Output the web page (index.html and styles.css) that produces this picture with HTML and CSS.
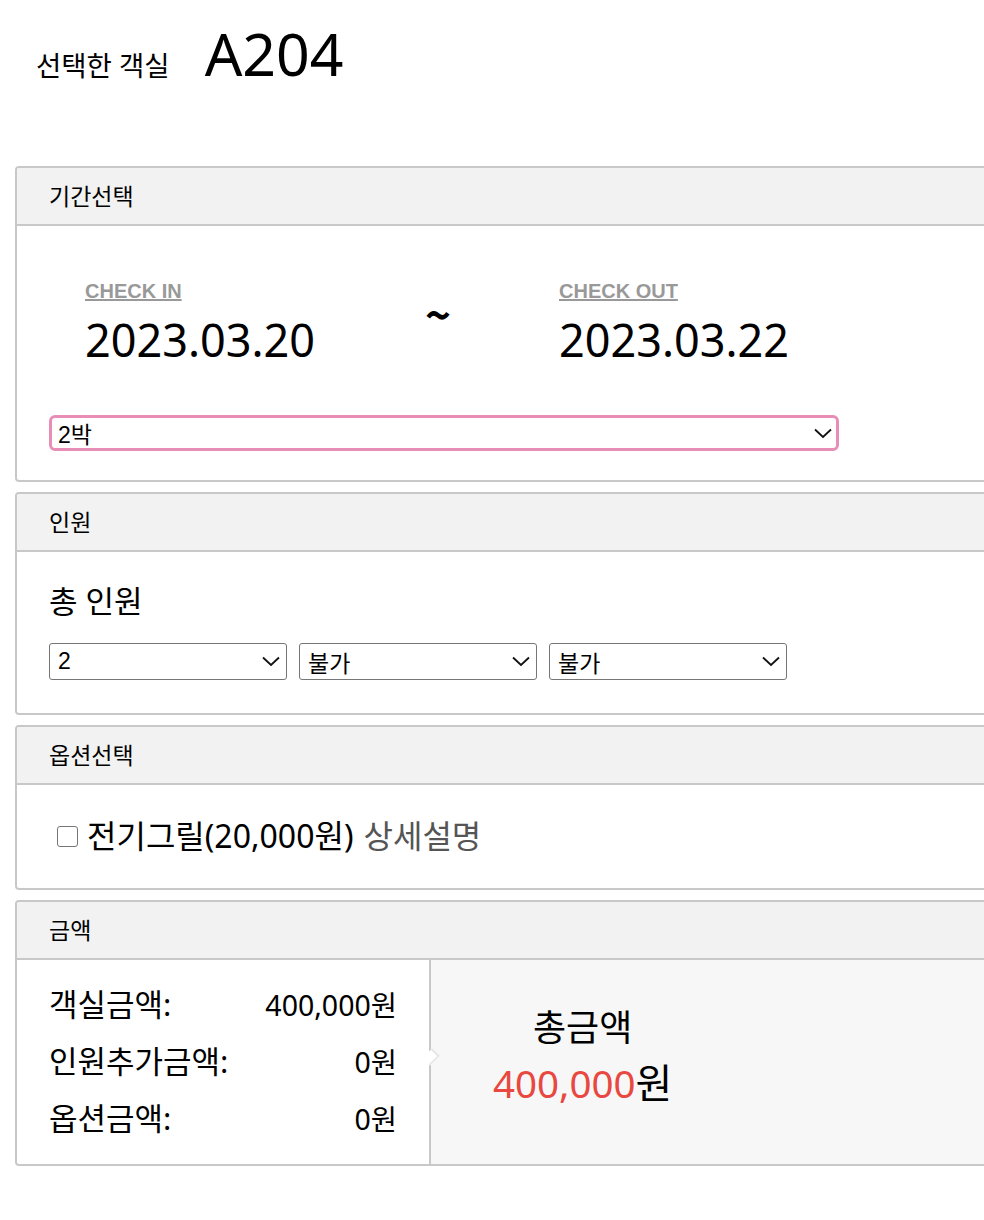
FILE: index.html
```html
<!DOCTYPE html>
<html lang="ko">
<head>
<meta charset="utf-8">
<title>객실 예약</title>
<link rel="stylesheet" href="styles.css">
</head>
<body>
<div class="page">
  <div class="room-title">
    <span class="room-label">선택한 객실</span>
    <span class="room-no">A204</span>
  </div>

  <section class="panel panel-period">
    <h2 class="panel-head">기간선택</h2>
    <div class="panel-body period-body">
      <div class="dates">
        <div class="date-col">
          <a class="date-label" href="#">CHECK IN</a>
          <div class="date-value">2023.03.20</div>
        </div>
        <div class="tilde">~</div>
        <div class="date-col">
          <a class="date-label" href="#">CHECK OUT</a>
          <div class="date-value">2023.03.22</div>
        </div>
      </div>
      <div class="sel sel-nights">
        <span class="sel-text">2박</span>
        <svg class="chev" width="18" height="11" viewBox="0 0 18 11"><path d="M1 1.5 L9 9 L17 1.5" fill="none" stroke="#111" stroke-width="1.8"/></svg>
      </div>
    </div>
  </section>

  <section class="panel panel-people">
    <h2 class="panel-head">인원</h2>
    <div class="panel-body people-body">
      <div class="people-title">총 인원</div>
      <div class="sel-row">
        <div class="sel sel-small">
          <span class="sel-text">2</span>
          <svg class="chev" width="18" height="11" viewBox="0 0 18 11"><path d="M1 1.5 L9 9 L17 1.5" fill="none" stroke="#111" stroke-width="1.8"/></svg>
        </div>
        <div class="sel sel-small">
          <span class="sel-text">불가</span>
          <svg class="chev" width="18" height="11" viewBox="0 0 18 11"><path d="M1 1.5 L9 9 L17 1.5" fill="none" stroke="#111" stroke-width="1.8"/></svg>
        </div>
        <div class="sel sel-small">
          <span class="sel-text">불가</span>
          <svg class="chev" width="18" height="11" viewBox="0 0 18 11"><path d="M1 1.5 L9 9 L17 1.5" fill="none" stroke="#111" stroke-width="1.8"/></svg>
        </div>
      </div>
    </div>
  </section>

  <section class="panel panel-option">
    <h2 class="panel-head">옵션선택</h2>
    <div class="panel-body option-body">
      <label class="option">
        <span class="checkbox"></span>
        <span class="option-name">전기그릴(20,000원)</span>
        <span class="option-more">상세설명</span>
      </label>
    </div>
  </section>

  <section class="panel panel-price">
    <h2 class="panel-head">금액</h2>
    <div class="price-body">
      <div class="price-list">
        <div class="price-row"><span class="price-label">객실금액:</span><span class="price-value">400,000원</span></div>
        <div class="price-row"><span class="price-label">인원추가금액:</span><span class="price-value">0원</span></div>
        <div class="price-row"><span class="price-label">옵션금액:</span><span class="price-value">0원</span></div>
      </div>
      <div class="price-total">
        <div class="total-box">
          <div class="total-label">총금액</div>
          <div class="total-value"><span class="total-num">400,000</span>원</div>
        </div>
      </div>
    </div>
  </section>
</div>
</body>
</html>
```

FILE: styles.css
```css
html, body {
  margin: 0;
  padding: 0;
  overflow: hidden;
  background: #fff;
}
body {
  font-family: "Noto Sans", "Noto Sans CJK KR", sans-serif;
  color: #000;
}
.page {
  width: 1040px;
  padding: 0 0 40px 15px;
}
.room-title {
  display: flex;
  align-items: baseline;
  padding: 24px 0 0 21px;
  height: 166px;
  box-sizing: border-box;
}
.room-label {
  font-size: 27.5px;
  margin-right: 35px;
}
.room-no {
  font-size: 59px;
  line-height: 1;
}
.panel {
  border: 2px solid #c8c8c8;
  border-radius: 4px;
  margin-bottom: 10px;
  overflow: hidden;
}
.panel-head {
  margin: 0;
  height: 56px;
  line-height: 56px;
  padding-left: 32px;
  font-size: 23px;
  font-weight: normal;
  background: #f2f2f2;
  border-bottom: 2px solid #c8c8c8;
}
.panel-body {
  padding-left: 32px;
}
.period-body {
  padding-top: 53px;
  padding-bottom: 29px;
}
.dates {
  display: flex;
  padding-left: 36px;
  margin-bottom: 45px;
}
.date-col {
  width: 340px;
}
.date-col:last-child {
  width: auto;
}
.date-label {
  display: block;
  font-family: "Liberation Sans", Arial, sans-serif;
  font-weight: bold;
  font-size: 20px;
  color: #999;
  text-decoration: underline;
  line-height: 24px;
}
.date-value {
  font-size: 45px;
  line-height: 60px;
  margin-top: 7px;
}
.tilde {
  width: 134px;
  font-family: "Noto Sans CJK KR", sans-serif;
  font-size: 44px;
  font-weight: bold;
  line-height: 44px;
  padding-top: 12px;
}
.sel {
  display: flex;
  align-items: center;
  justify-content: space-between;
  box-sizing: border-box;
  background: #fff;
  font-family: "Liberation Sans", "Noto Sans CJK KR", sans-serif;
  font-size: 23px;
}
.sel-nights {
  width: 790px;
  height: 36px;
  border: 3px solid #e88db5;
  border-radius: 6px;
  padding: 0 4px 0 6px;
}
.people-body {
  padding-top: 31px;
  padding-bottom: 33px;
}
.people-title {
  font-size: 31px;
  line-height: 36px;
  margin-bottom: 24px;
}
.sel-row {
  display: flex;
  gap: 12px;
}
.sel-small {
  width: 238px;
  height: 37px;
  border: 1px solid #767676;
  border-radius: 3px;
  padding: 0 6px 0 8px;
}
.option-body {
  padding-top: 32px;
  padding-bottom: 33px;
  padding-left: 40px;
}
.option {
  display: flex;
  align-items: center;
  font-size: 32px;
  line-height: 38px;
}
.checkbox {
  width: 21px;
  height: 21px;
  border: 1.5px solid #767676;
  border-radius: 3px;
  box-sizing: border-box;
  margin-right: 9px;
}
.option-more {
  color: #555;
  margin-left: 10px;
}
.price-body {
  display: flex;
}
.price-list {
  width: 348px;
  padding: 16px 32px 17px 32px;
  border-right: 2px solid #c8c8c8;
  position: relative;
}
.price-list::after {
  content: "";
  position: absolute;
  right: -9px;
  top: 90px;
  width: 12px;
  height: 12px;
  background: #fff;
  transform: rotate(45deg) scale(0.75, 1);
  border-top: 2px solid #e6e6e6;
  border-right: 2px solid #e6e6e6;
}
.price-row {
  display: flex;
  justify-content: space-between;
  align-items: baseline;
  line-height: 57px;
  height: 57px;
}
.price-label {
  font-size: 31px;
}
.price-value {
  font-size: 28.5px;
}
.price-total {
  flex: 1;
  background: #f7f7f7;
  padding-left: 62px;
  padding-top: 46px;
}
.total-box {
  display: inline-block;
  text-align: center;
}
.total-label {
  font-size: 36px;
  line-height: 44px;
}
.total-value {
  font-size: 40px;
  line-height: 50px;
  margin-top: 8px;
}
.total-num {
  color: #e8483f;
  font-size: 38.5px;
}
```
